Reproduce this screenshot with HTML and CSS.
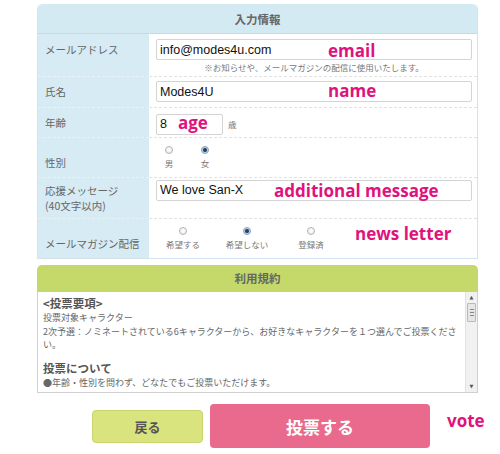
FILE: index.html
```html
<!DOCTYPE html>
<html lang="ja">
<head>
    <meta charset="UTF-8">
    <meta name="viewport" content="width=device-width, initial-scale=1.0">
    <title>投票フォーム</title>
    <link rel="stylesheet" href="styles.css">
</head>
<body>
<div class="page">

    <!-- 入力情報 -->
    <div class="panel">
        <div class="panel-head">入力情報</div>
        <table class="form-table">
            <tr class="row-email">
                <th class="th-top">メールアドレス</th>
                <td>
                    <input type="text" class="text-input" value="info@modes4u.com">
                    <p class="note">※お知らせや、メールマガジンの配信に使用いたします。</p>
                </td>
            </tr>
            <tr class="row-name">
                <th>氏名</th>
                <td><input type="text" class="text-input" value="Modes4U"></td>
            </tr>
            <tr class="row-age">
                <th>年齢</th>
                <td><input type="text" class="text-input age-input" value="8"><span class="unit">歳</span></td>
            </tr>
            <tr class="row-gender">
                <th class="th-low">性別</th>
                <td>
                    <div class="radio-group">
                        <label class="radio-item gender"><input type="radio" name="gender"><span>男</span></label>
                        <label class="radio-item gender"><input type="radio" name="gender" checked><span>女</span></label>
                    </div>
                </td>
            </tr>
            <tr class="row-message">
                <th>応援メッセージ<br>(40文字以内)</th>
                <td class="td-top"><input type="text" class="text-input" value="We love San-X"></td>
            </tr>
            <tr class="row-mail">
                <th class="th-low">メールマガジン配信</th>
                <td>
                    <div class="radio-group">
                        <label class="radio-item mail"><input type="radio" name="mail"><span>希望する</span></label>
                        <label class="radio-item mail"><input type="radio" name="mail" checked><span>希望しない</span></label>
                        <label class="radio-item mail"><input type="radio" name="mail"><span>登録済</span></label>
                    </div>
                </td>
            </tr>
        </table>
    </div>

    <!-- 利用規約 -->
    <div class="terms">
        <div class="terms-head">利用規約</div>
        <div class="terms-box">
            <div class="terms-body">
                <h3>&lt;投票要項&gt;</h3>
                <p>投票対象キャラクター<br>2次予選：ノミネートされている6キャラクターから、お好きなキャラクターを１つ選んでご投票ください。</p>
                <h3>投票について</h3>
                <p>●年齢・性別を問わず、どなたでもご投票いただけます。</p>
            </div>
            <div class="scrollbar">
                <span class="sb-arrow">&#9650;</span>
                <span class="sb-thumb"></span>
                <span class="sb-space"></span>
                <span class="sb-arrow">&#9660;</span>
            </div>
        </div>
    </div>

    <div class="buttons">
        <button type="button" class="btn-back">戻る</button>
        <button type="button" class="btn-vote">投票する</button>
    </div>

    <!-- 注釈 -->
    <span class="memo memo-email">email</span>
    <span class="memo memo-name">name</span>
    <span class="memo memo-age">age</span>
    <span class="memo memo-message">additional message</span>
    <span class="memo memo-mail">news letter</span>
    <span class="memo memo-vote">vote</span>

</div>
</body>
</html>
```

FILE: styles.css
```css
body {
    margin: 0;
    font-family: "Noto Sans CJK JP", sans-serif;
    color: #666;
    background: #fff;
}
.page {
    position: relative;
    width: 500px;
    height: 454px;
    padding-top: 4px;
    box-sizing: border-box;
    overflow: hidden;
}

/* 入力情報 */
.panel {
    margin-left: 37px;
    width: 441px;
    border: 1px solid #d3e3ea;
    border-top: none;
    border-radius: 5px 5px 0 0;
    box-sizing: border-box;
}
.panel-head {
    height: 30px;
    line-height: 30px;
    text-align: center;
    font-size: 11.5px;
    font-weight: bold;
    color: #666;
    background-color: #d4eaf2;
    border-radius: 5px 5px 0 0;
    border-bottom: 1px solid #c3dbe4;
    box-sizing: border-box;
}
.form-table {
    width: 100%;
    border-collapse: collapse;
}
.form-table th {
    width: 104px;
    padding: 0 0 0 7px;
    text-align: left;
    font-size: 10.5px;
    font-weight: normal;
    line-height: 15px;
    color: #666;
    background-color: #d6ebf3;
    vertical-align: middle;
    border-top: 1px dashed #e8f3f7;
}
.form-table td {
    padding: 0 0 0 7px;
    vertical-align: middle;
    border-top: 1px dashed #e2e2e2;
}
.form-table tr:first-child th,
.form-table tr:first-child td {
    border-top: none;
}
.form-table .th-top {
    vertical-align: top;
    padding-top: 8px;
}
.form-table .th-low {
    vertical-align: top;
    padding-top: 17px;
}
.form-table .td-top {
    vertical-align: top;
    padding-top: 2px;
}
.row-email { height: 42px; }
.row-name { height: 31px; }
.row-age { height: 30px; }
.row-gender { height: 40px; }
.row-message { height: 41px; }
.row-mail { height: 40px; }
.row-email td {
    vertical-align: top;
    padding-top: 5px;
}

.text-input {
    display: block;
    width: 316px;
    height: 21px;
    margin: 0;
    padding: 0 3px;
    box-sizing: border-box;
    border: 1px solid #d4d4d4;
    border-radius: 2px;
    font-family: "Liberation Sans", Arial, sans-serif;
    font-size: 12.5px;
    color: #111;
    background: #fff;
}
.age-input {
    display: inline-block;
    width: 67px;
    vertical-align: middle;
}
.unit {
    margin-left: 5px;
    font-size: 8.5px;
    color: #777;
    vertical-align: middle;
}
.note {
    margin: 1px 0 0;
    width: 316px;
    text-align: center;
    font-size: 8.5px;
    line-height: 12px;
    color: #777;
}

/* ラジオ */
.radio-group {
    display: flex;
    margin-left: -5px;
}
.radio-item {
    display: flex;
    flex-direction: column;
    align-items: center;
    font-size: 8.5px;
    line-height: 12px;
    color: #777;
}
.radio-item.gender { width: 36px; }
.radio-item.mail { width: 64px; }
.radio-item input {
    appearance: none;
    -webkit-appearance: none;
    width: 8px;
    height: 8px;
    margin: 0 0 3px;
    border: 1px solid #b5b5b5;
    border-radius: 50%;
    background: radial-gradient(circle at 50% 40%, #fff 0, #e6e6e6 100%);
}
.radio-item input:checked {
    border-color: #8aa5bd;
    background: radial-gradient(circle, #24415e 0 1.5px, #bcd2e6 2.5px);
}

/* 利用規約 */
.terms {
    margin: 6px 0 0 37px;
    width: 441px;
}
.terms-head {
    height: 27px;
    line-height: 27px;
    text-align: center;
    font-size: 11.5px;
    font-weight: bold;
    color: #666;
    background-color: #c5d86a;
    border-radius: 5px 5px 0 0;
}
.terms-box {
    display: flex;
    height: 101px;
    border: 1px solid #d0d0d0;
    border-top: none;
    box-sizing: border-box;
}
.terms-body {
    flex: 1;
    overflow: hidden;
    padding: 4px 6px 0 5px;
}
.terms-body h3 {
    margin: 0;
    font-size: 11.5px;
    line-height: 15px;
    color: #555;
}
.terms-body p {
    margin: 0 0 9px;
    font-size: 9px;
    line-height: 13.5px;
    color: #666;
}
.scrollbar {
    display: flex;
    flex-direction: column;
    width: 11px;
    background: #f1f1f1;
    border-left: 1px solid #e2e2e2;
}
.sb-arrow {
    height: 11px;
    line-height: 11px;
    text-align: center;
    font-family: "DejaVu Sans", sans-serif;
    font-size: 5px;
    color: #555;
}
.sb-thumb {
    height: 17px;
    margin: 0 1px;
    border: 1px solid #b9b9b9;
    border-radius: 1px;
    background:
        linear-gradient(#888, #888) center 5px / 4px 1px no-repeat,
        linear-gradient(#888, #888) center 8px / 4px 1px no-repeat,
        linear-gradient(#888, #888) center 11px / 4px 1px no-repeat,
        #e6e6e6;
}
.sb-space {
    flex: 1;
}

/* ボタン */
.buttons {
    display: flex;
    align-items: center;
    gap: 7px;
    margin-top: 11px;
    padding-left: 92px;
}
.btn-back {
    width: 111px;
    height: 33px;
    background-color: #d9e47e;
    border: 1px solid #c9d46c;
    border-radius: 4px;
    font-family: "Noto Sans CJK JP", sans-serif;
    font-size: 13px;
    font-weight: bold;
    color: #555;
    cursor: pointer;
}
.btn-vote {
    width: 220px;
    height: 44px;
    background-color: #e96a8d;
    border: none;
    border-radius: 4px;
    font-family: "Noto Sans CJK JP", sans-serif;
    font-size: 17px;
    font-weight: bold;
    color: #fff;
    cursor: pointer;
}

/* 注釈 (画像の上に重ねた文字) */
.memo {
    position: absolute;
    font-family: "Open Sans", sans-serif;
    font-size: 17px;
    font-weight: bold;
    line-height: 20px;
    color: #e0127e;
    white-space: nowrap;
}
.memo-email { left: 328px; top: 41px; }
.memo-name { left: 328px; top: 81px; }
.memo-age { left: 178px; top: 113px; }
.memo-message { left: 274px; top: 181px; }
.memo-mail { left: 355px; top: 224px; }
.memo-vote { left: 447px; top: 411px; }
```
